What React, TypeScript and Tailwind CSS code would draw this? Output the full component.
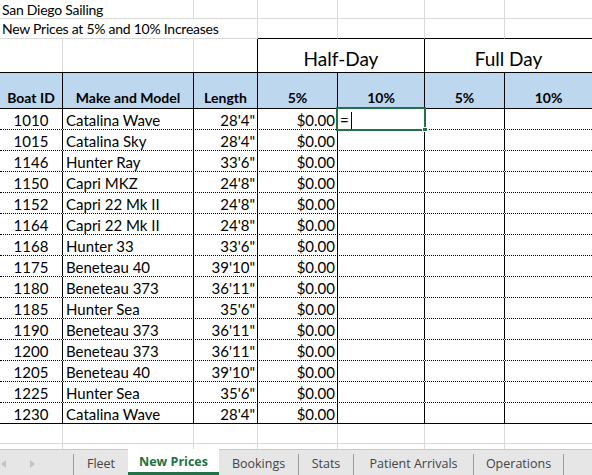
import React from "react";

const rows: [string, string, string][] = [
  ["1010", "Catalina Wave", "28'4\""],
  ["1015", "Catalina Sky", "28'4\""],
  ["1146", "Hunter Ray", "33'6\""],
  ["1150", "Capri MKZ", "24'8\""],
  ["1152", "Capri 22 Mk II", "24'8\""],
  ["1164", "Capri 22 Mk II", "24'8\""],
  ["1168", "Hunter 33", "33'6\""],
  ["1175", "Beneteau 40", "39'10\""],
  ["1180", "Beneteau 373", "36'11\""],
  ["1185", "Hunter Sea", "35'6\""],
  ["1190", "Beneteau 373", "36'11\""],
  ["1200", "Beneteau 373", "36'11\""],
  ["1205", "Beneteau 40", "39'10\""],
  ["1225", "Hunter Sea", "35'6\""],
  ["1230", "Catalina Wave", "28'4\""],
];

const G = "border-[#dadada]";

function GridRow({ h }: { h: string }) {
  return (
    <div className={`flex ${h}`}>
      <div className={`w-[63px] border-r ${G}`} />
      <div className={`w-[131px] border-r ${G}`} />
      <div className={`w-[64px] border-r ${G}`} />
      <div className={`w-[80px] border-r ${G}`} />
      <div className={`w-[87px] border-r ${G}`} />
      <div className={`w-[80px] border-r ${G}`} />
      <div className="flex-1" />
    </div>
  );
}

export default function App() {
  return (
    <div className="relative w-[592px] h-[475px] overflow-hidden bg-white flex flex-col text-black font-['Lato',sans-serif] text-[15px]">
      {/* Row 1 */}
      <div className={`flex h-[19px] border-b ${G}`}>
        <div className={`w-[194px] border-r ${G} flex items-end pl-[2px] leading-[17px] whitespace-nowrap text-[14px] tracking-[-0.25px]`}>San Diego Sailing</div>
        <div className={`w-[64px] border-r ${G}`} />
        <div className={`w-[80px] border-r ${G}`} />
        <div className={`w-[87px] border-r ${G}`} />
        <div className={`w-[80px] border-r ${G}`} />
        <div className="flex-1" />
      </div>
      {/* Row 2 */}
      <div className="flex h-[20px]">
        <div className={`w-[258px] border-r border-b ${G} flex items-end pl-[2px] leading-[18px] whitespace-nowrap text-[14px] tracking-[-0.25px]`}>New Prices at 5% and 10% Increases</div>
        <div className={`w-[80px] border-r ${G} border-b border-b-black`} />
        <div className={`w-[87px] border-r ${G} border-b border-b-black`} />
        <div className={`w-[80px] border-r ${G} border-b border-b-black`} />
        <div className="flex-1 border-b border-black" />
      </div>
      {/* Row 3 */}
      <div className="flex h-[34px] border-b border-black">
        <div className={`w-[63px] border-r ${G}`} />
        <div className={`w-[131px] border-r ${G}`} />
        <div className="w-[64px] border-r border-black" />
        <div className="w-[167px] border-r border-black flex items-end justify-center pb-[2px] text-[19px] leading-[22px]">Half-Day</div>
        <div className="flex-1 flex items-end justify-center pb-[2px] text-[19px] leading-[22px]">Full Day</div>
      </div>
      {/* Row 4 header */}
      <div className="flex h-[36px] border-b border-black bg-[#bdd7ee] font-bold text-[14px] leading-[17px]">
        <div className="w-[63px] border-r border-black flex items-end justify-center pb-[2px]">Boat ID</div>
        <div className="w-[131px] border-r border-black flex items-end justify-center pb-[2px]">Make and Model</div>
        <div className="w-[64px] border-r border-black flex items-end justify-center pb-[2px]">Length</div>
        <div className="w-[80px] border-r border-black flex items-end justify-center pb-[2px]">5%</div>
        <div className="w-[87px] border-r border-black flex items-end justify-center pb-[2px]">10%</div>
        <div className="w-[80px] border-r border-black flex items-end justify-center pb-[2px]">5%</div>
        <div className="flex-1 flex items-end justify-center pb-[2px]">10%</div>
      </div>
      {/* Data rows */}
      {rows.map(([id, model, len], i) => (
        <div
          key={i}
          className={`flex h-[21px] border-b border-black ${i === rows.length - 1 ? "border-solid" : "border-dotted"} leading-[17px]`}
        >
          <div className="w-[63px] border-r border-black flex items-end justify-center">{id}</div>
          <div className="w-[131px] border-r border-black flex items-end pl-[3px] whitespace-nowrap">{model}</div>
          <div className="w-[64px] border-r border-black flex items-end justify-end pr-[2px]">{len}</div>
          <div className="w-[80px] border-r border-black flex items-end justify-end pr-[2px]">$0.00</div>
          <div className="w-[87px] border-r border-black flex items-end pl-[2px]">
            {i === 0 ? (
              <span className="flex items-end">
                =<span className="ml-[2px] mb-[0px] w-px h-[17px] bg-black inline-block" />
              </span>
            ) : null}
          </div>
          <div className="w-[80px] border-r border-black" />
          <div className="flex-1" />
        </div>
      ))}
      {/* Empty rows */}
      <div className={`border-b ${G}`}>
        <GridRow h="h-[19px]" />
      </div>
      <GridRow h="h-[5px]" />

      {/* Sheet tabs */}
      <div className="flex h-[26px] bg-[#e6e6e6] font-['Open_Sans',sans-serif] text-[12.5px] text-[#444444]">
        <div className="w-[73px] h-full border-t border-[#c8c8c8] flex items-center pt-[2px] text-[#c4c4c4]">
          <svg width="6" height="8" viewBox="0 0 6 8" className="ml-[1px]"><path d="M5 0L0 4L5 8Z" fill="currentColor" /></svg>
          <svg width="6" height="8" viewBox="0 0 6 8" className="ml-[22px]"><path d="M1 0L6 4L1 8Z" fill="currentColor" /></svg>
        </div>
        <div className="h-full border-t border-[#c8c8c8] flex items-end"><div className="w-px h-[21px] bg-[#9a9a9a]" /></div>
        <div className="w-[54px] h-full border-t border-[#c8c8c8] flex items-center justify-center pt-[3px]">Fleet</div>
        <div className="w-[91px] h-full bg-white flex flex-col">
          <div className="flex-1 flex items-center justify-center font-bold text-[#217346] pt-[3px]">New Prices</div>
          <div className="h-[3px] bg-[#217346]" />
        </div>
        <div className="w-[79px] h-full border-t border-[#c8c8c8] flex items-center justify-center pt-[3px]">Bookings</div>
        <div className="h-full border-t border-[#c8c8c8] flex items-end"><div className="w-px h-[21px] bg-[#9a9a9a]" /></div>
        <div className="w-[54px] h-full border-t border-[#c8c8c8] flex items-center justify-center pt-[3px]">Stats</div>
        <div className="h-full border-t border-[#c8c8c8] flex items-end"><div className="w-px h-[21px] bg-[#9a9a9a]" /></div>
        <div className="w-[119px] h-full border-t border-[#c8c8c8] flex items-center justify-center pt-[3px]">Patient Arrivals</div>
        <div className="h-full border-t border-[#c8c8c8] flex items-end"><div className="w-px h-[21px] bg-[#9a9a9a]" /></div>
        <div className="w-[89px] h-full border-t border-[#c8c8c8] flex items-center justify-center pt-[3px]">Operations</div>
        <div className="h-full border-t border-[#c8c8c8] flex items-end"><div className="w-px h-[21px] bg-[#9a9a9a]" /></div>
        <div className="flex-1 h-full border-t border-[#c8c8c8]" />
      </div>

      {/* Active cell selection overlay */}
      <div className="absolute left-[336px] top-[107px] w-[90px] h-[24px] border-2 border-[#217346] pointer-events-none" />
      <div className="absolute left-[422px] top-[127px] w-[6px] h-[5px] bg-[#217346] border border-white pointer-events-none" />
    </div>
  );
}
